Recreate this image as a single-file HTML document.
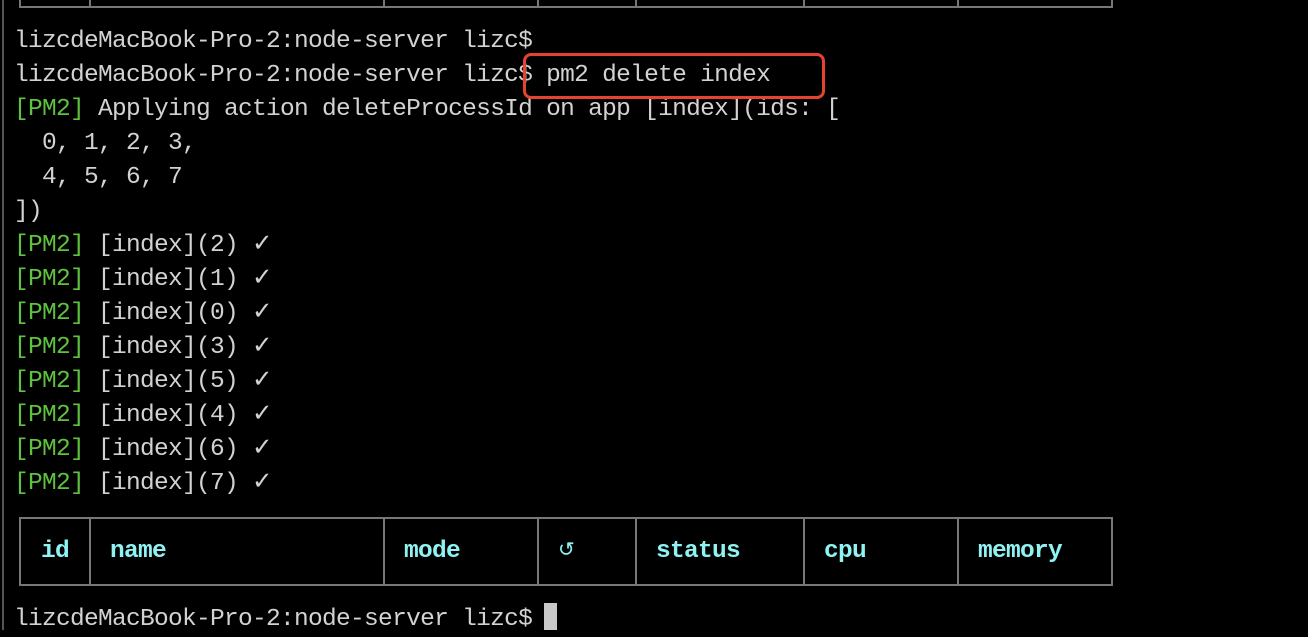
<!DOCTYPE html>
<html><head><style>
html,body{margin:0;padding:0;background:#000;}
body{width:1308px;height:630px;overflow:hidden;position:relative;font-family:"Liberation Mono",monospace;font-size:24.5px;letter-spacing:-0.7px;color:#d2d2d2;}
.l{position:absolute;left:14px;height:34px;line-height:34px;white-space:pre;}
.g{color:#5fc23e}
.edge{position:absolute;left:2px;top:0;width:2px;height:630px;background:#555}
.hl{position:absolute;height:2px;background:#777}
.vl{position:absolute;width:2px;background:#777}
.th{position:absolute;top:535px;line-height:34px;color:#8ff3f3;font-weight:bold}
.box{position:absolute;left:523px;top:53px;width:296px;height:40px;border:3px solid #e5432f;border-radius:8px}
.cur{position:absolute;left:544px;top:603px;width:13px;height:27px;background:#c8c8c8}
</style></head><body>
<div class="edge"></div>
<div class="hl" style="left:19px;top:6px;width:1094px"></div>
<div class="vl" style="left:19px;top:0;height:8px"></div>
<div class="vl" style="left:89px;top:0;height:8px"></div>
<div class="vl" style="left:383px;top:0;height:8px"></div>
<div class="vl" style="left:537px;top:0;height:8px"></div>
<div class="vl" style="left:635px;top:0;height:8px"></div>
<div class="vl" style="left:803px;top:0;height:8px"></div>
<div class="vl" style="left:957px;top:0;height:8px"></div>
<div class="vl" style="left:1111px;top:0;height:8px"></div>

<div class="l" style="top:25px">lizcdeMacBook-Pro-2:node-server lizc$</div>
<div class="l" style="top:59px">lizcdeMacBook-Pro-2:node-server lizc$ pm2 delete index</div>
<div class="l" style="top:93px"><span class="g">[PM2]</span> Applying action deleteProcessId on app [index](ids: [</div>
<div class="l" style="top:127px">  0, 1, 2, 3,</div>
<div class="l" style="top:161px">  4, 5, 6, 7</div>
<div class="l" style="top:195px">])</div>
<div class="l" style="top:229px"><span class="g">[PM2]</span> [index](2) ✓</div>
<div class="l" style="top:263px"><span class="g">[PM2]</span> [index](1) ✓</div>
<div class="l" style="top:297px"><span class="g">[PM2]</span> [index](0) ✓</div>
<div class="l" style="top:331px"><span class="g">[PM2]</span> [index](3) ✓</div>
<div class="l" style="top:365px"><span class="g">[PM2]</span> [index](5) ✓</div>
<div class="l" style="top:399px"><span class="g">[PM2]</span> [index](4) ✓</div>
<div class="l" style="top:433px"><span class="g">[PM2]</span> [index](6) ✓</div>
<div class="l" style="top:467px"><span class="g">[PM2]</span> [index](7) ✓</div>
<div class="box"></div>

<div class="hl" style="left:19px;top:517px;width:1094px"></div>
<div class="hl" style="left:19px;top:584px;width:1094px"></div>
<div class="vl" style="left:19px;top:517px;height:69px"></div>
<div class="vl" style="left:89px;top:517px;height:69px"></div>
<div class="vl" style="left:383px;top:517px;height:69px"></div>
<div class="vl" style="left:537px;top:517px;height:69px"></div>
<div class="vl" style="left:635px;top:517px;height:69px"></div>
<div class="vl" style="left:803px;top:517px;height:69px"></div>
<div class="vl" style="left:957px;top:517px;height:69px"></div>
<div class="vl" style="left:1111px;top:517px;height:69px"></div>
<div class="th" style="left:41px">id</div>
<div class="th" style="left:110px">name</div>
<div class="th" style="left:404px">mode</div>
<div class="th" style="left:558px;font-weight:normal;font-size:20px">↺</div>
<div class="th" style="left:656px">status</div>
<div class="th" style="left:824px">cpu</div>
<div class="th" style="left:978px">memory</div>

<div class="l" style="top:603px">lizcdeMacBook-Pro-2:node-server lizc$</div>
<div class="cur"></div>
</body></html>
